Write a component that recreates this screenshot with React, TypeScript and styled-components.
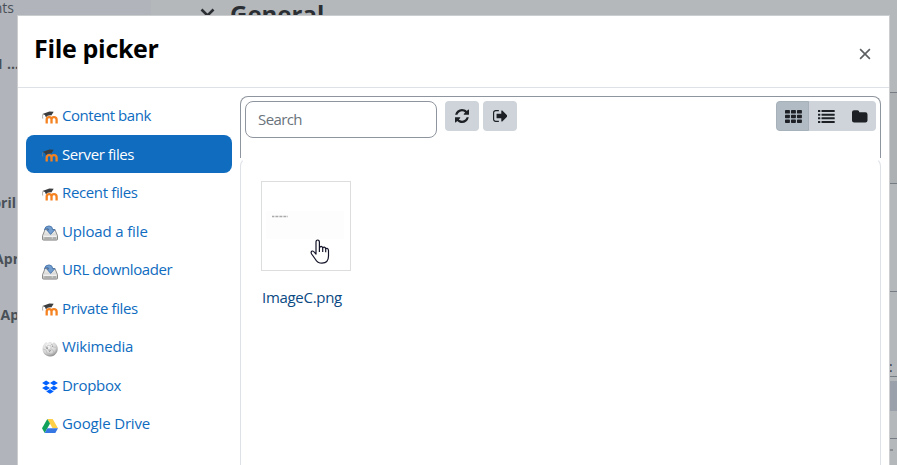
import React from "react";
import styled, { createGlobalStyle, css } from "styled-components";

const Global = createGlobalStyle`
  * { box-sizing: border-box; }
  body {
    margin: 0;
    overflow: hidden;
    background: #b4b8bb;
    font-family: "Open Sans", "Noto Sans", sans-serif;
    font-size: 15px;
    line-height: 24px;
    color: #1d2125;
  }
  button, input { font: inherit; }
`;

const Screen = styled.div`
  position: relative;
  width: 897px;
  height: 465px;
  overflow: hidden;
`;

/* ---------- dimmed course page ---------- */
const CoursePage = styled.div`
  display: grid;
  grid-template-columns: 151px 1fr 8px;
  height: 100%;
  background: #b4b8bb;
`;
const Drawer = styled.aside`
  background: #b1b4ba;
  color: #495057;
`;
const DrawerEntry = styled.div<{ $gap: number; $width: number; $bold?: boolean }>`
  width: ${(p) => p.$width}px;
  margin-top: ${(p) => p.$gap}px;
  display: flex;
  justify-content: flex-end;
  white-space: nowrap;
  font-size: 14px;
  line-height: 20px;
  font-weight: ${(p) => (p.$bold ? 700 : 400)};
`;
const SectionTitle = styled.div`
  display: flex;
  align-items: flex-start;
  gap: 15px;
  padding-left: 49px;
  font-size: 24px;
  line-height: 27px;
  letter-spacing: 0;
  font-weight: 700;
  color: #2b2f34;
  svg { margin-top: 8px; }
`;
const FormEdge = styled.div`
  display: flex;
  flex-direction: column;
  padding-top: 92px;
`;
const EdgeCell = styled.div<{ $h: number; $fill?: string; $line?: boolean }>`
  height: ${(p) => p.$h}px;
  flex: none;
  background: ${(p) => p.$fill || "transparent"};
  border-top: ${(p) => (p.$line ? "1px solid #767c84" : "0")};
`;
const Colon = styled.div`
  height: 16px;
  font-size: 14px;
  line-height: 14px;
  text-indent: 0;
  color: #35384a;
`;
const EdgeDash = styled.div`
  width: 3px;
  height: 2px;
  margin: 10px 0 0 1px;
  background: #8a8e92;
`;

/* ---------- dialog ---------- */
const Dialog = styled.section`
  position: absolute;
  left: 17px;
  top: 15px;
  width: 873px;
  height: 470px;
  background: #fff;
  border: 1px solid #cbcdcf;
`;
const DialogHeader = styled.header`
  display: flex;
  justify-content: space-between;
  height: 72px;
  padding: 14px 18px 0 16px;
  border-bottom: 1px solid #dee2e6;
`;
const Title = styled.h3`
  margin: 0;
  font-size: 25px;
  line-height: 36px;
  letter-spacing: -0.33px;
  color: #000;
`;
const CloseButton = styled.button`
  display: flex;
  padding: 0;
  height: 16px;
  margin-top: 17.5px;
  border: 0;
  background: none;
`;
const DialogBody = styled.div`
  display: flex;
  gap: 8px;
  padding: 8px 8px 0 8px;
`;
const RepositoryList = styled.nav`
  display: grid;
  grid-auto-rows: 38.5px;
  width: 206px;
  flex: none;
`;
const Repository = styled.a<{ $active?: boolean; $track: number }>`
  display: flex;
  gap: 4px;
  height: 38px;
  margin-top: 0.5px;
  padding: 6.8px 16px;
  border-radius: 8px;
  color: #0f6cbf;
  letter-spacing: ${(p) => p.$track}px;
  white-space: nowrap;
  svg { flex: none; margin-top: 6.7px; }
  ${(p) => p.$active && css`
    background: #0f6cbf;
    color: #fff;
  `}
`;
const Browser = styled.main`
  width: 641px;
  flex: none;
`;
const Toolbar = styled.div`
  display: flex;
  align-items: flex-start;
  height: 62px;
  padding: 4px;
  border: 1px solid #8f959e;
  border-bottom: 0;
  border-radius: 8px 8px 0 0;
`;
const SearchInput = styled.input`
  width: 192px;
  height: 37px;
  padding: 0 12px 2px;
  margin-right: 8px;
  border: 1px solid #8f959e;
  border-radius: 8px;
  background: #fff;
  letter-spacing: -0.6px;
  &::placeholder { color: #6a737b; opacity: 1; }
`;
const ToolButton = styled.button`
  display: flex;
  align-items: center;
  justify-content: center;
  width: 34px;
  height: 30px;
  margin-right: 4px;
  padding: 0;
  border: 0;
  border-radius: 4px;
  background: #ced4da;
`;
const ViewGroup = styled.div`
  display: flex;
  height: 30px;
  margin-left: auto;
  border-radius: 4px;
  overflow: hidden;
  background: #ced4da;
`;
const ViewButton = styled.button<{ $on?: boolean; $w?: number }>`
  display: flex;
  align-items: center;
  justify-content: center;
  width: ${(p) => p.$w || 33}px;
  padding: 0 0 0 1px;
  border: ${(p) => (p.$on ? "1px solid #a6b1ba" : "0")};
  border-radius: ${(p) => (p.$on ? "4px 0 0 4px" : "0")};
  background: ${(p) => (p.$on ? "#b1bbc4" : "transparent")};
`;
const FileArea = styled.div`
  height: 320px;
  padding: 22px 20px;
  border: 1px solid #dee2e6;
  border-top-color: #fff;
  border-radius: 8px 8px 0 0;
`;
const FileCard = styled.figure`
  display: flex;
  flex-direction: column;
  width: 110px;
  margin: 0;
`;
const Thumbnail = styled.div`
  position: relative;
  width: 90px;
  height: 90px;
  border: 1px solid #dcdddd;
`;
const Pointer = styled.svg`
  position: absolute;
  left: 48px;
  top: 57px;
`;
const FileName = styled.figcaption`
  margin-top: 14px;
  padding-left: 1px;
  color: #0b4a83;
  letter-spacing: -0.3px;
`;

/* ---------- icons ---------- */
const MoodleIcon = () => (
  <svg width="16" height="16" viewBox="0 0 16 16">
    <path d="M4.700 13.600V9.600Q4.700 7.100 7.100 7.100T9.500 9.600V13.600M9.500 9.600Q9.500 7.100 12 7.100t2.600 2.500v4" fill="none" stroke="#f58220" strokeWidth="2.300" />
    <path d="M.4 4 7.400 1.500l4.300.3-2.400 3.600Q5.400 5 3.900 7.200L2.900 5z" fill="#3c3d3e" />
    <path d="M.9 4.300Q.3 6 .7 8.600" fill="none" stroke="#8a8782" strokeWidth=".7" />
  </svg>
);
const DownloadIcon = () => (
  <svg width="16" height="16" viewBox="0 0 16 16">
    <defs>
      <linearGradient id="drive" x1="0" y1="0" x2="0" y2="1">
        <stop stopColor="#f4f4f3" /><stop offset="1" stopColor="#bfc0be" />
      </linearGradient>
    </defs>
    <path d="M3.100 4.500h9.800l2.600 6.200v3.500q0 .9-.9.9H1.400q-.9 0-.9-.9v-3.500z" fill="url(#drive)" stroke="#8a8c8a" />
    <path d="M1.400 11.200h13.200" stroke="#fff" />
    <path d="M2.400 13h7.300M11 13h3" stroke="#929491" />
    <path d="M2.400 4.900Q3 .9 7 .9q3.400 0 3.800 3.800h2.100L8.600 9.400 4.700 4.900h2.200Q6.400 3.200 4.900 3.400 3.400 3.500 2.400 4.900z" fill="#729fcf" stroke="#3c69a5" strokeWidth=".8" />
  </svg>
);
const WikimediaIcon = () => (
  <svg width="16" height="16" viewBox="0 0 16 16">
    <defs>
      <radialGradient id="globe" cx=".4" cy=".3" r=".8">
        <stop stopColor="#fafafa" /><stop offset=".6" stopColor="#d4d4d4" /><stop offset="1" stopColor="#707070" />
      </radialGradient>
    </defs>
    <path d="M2.700 2.200 4.400 1l1.300 1.200 1.700-1.400 2 .5.7 1.100 1.800-1.100A7.600 7.600 0 1 1 .5 8.200a8 8 0 0 1 2.200-6z" fill="url(#globe)" />
    <path d="m3 5 2 1 1-2 2 1 2-2 1 3 3 .3M1 8l3 1 1 3 3 .5 2 2M5 6l1 3 3-1 2 1 1 3M9 5v3" fill="none" stroke="#aaa" strokeWidth=".5" />
    <path d="m4 6 1 2 .8-1.700M7 9l.6 1.700L9 9M10 5l1 .8" fill="none" stroke="#777" strokeWidth=".6" />
  </svg>
);
const DropboxIcon = () => (
  <svg width="16" height="16" viewBox="0 0 16 16" fill="#0061fe">
    <path d="m4.100 1.500 3.900 2.500-3.900 2.500L.1 4zM11.900 1.500l4 2.500-4 2.500L8 4zM4.100 6.700 8 9.100l-3.900 2.500-4-2.500zM11.900 6.700l4 2.400-4 2.500L8 9.100zM8 10l3.800 2.400L8 14.800l-3.800-2.400z" />
  </svg>
);
const DriveIcon = () => (
  <svg width="16" height="16" viewBox="0 0 16 16">
    <path d="M5.300 1h5.400L16 10.200h-5.400z" fill="#ffcf48" />
    <path d="M5.300 1 8 5.600 2.700 14.900 0 10.200z" fill="#11a15b" />
    <path d="M5.400 10.200H16l-2.700 4.700H2.700z" fill="#3777e3" />
  </svg>
);
const RefreshIcon = () => (
  <svg width="14" height="14" viewBox="0 128 1536 1536" fill="#1d2125">
    <path transform="translate(0 128)" d="M1511 928q0 5-1 7-64 268-268 434.500t-478 166.500q-146 0-282.500-55t-243.500-157l-129 129q-19 19-45 19t-45-19-19-45v-448q0-26 19-45t45-19h448q26 0 45 19t19 45-19 45l-137 137q71 66 161 102t187 36q134 0 250-65t186-179q11-17 53-117 8-23 30-23h192q13 0 22.500 9.500t9.500 22.500zm25-800v448q0 26-19 45t-45 19h-448q-26 0-45-19t-19-45 19-45l138-138q-148-137-349-137-134 0-250 65t-186 179q-11 17-53 117-8 23-30 23h-199q-13 0-22.500-9.500t-9.500-22.500v-7q65-268 270-434.500t480-166.500q146 0 284 55.500t245 156.500l130-129q19-19 45-19t45 19 19 45z" />
  </svg>
);
const SignOutIcon = () => (
  <svg width="14.500" height="12" viewBox="0 256 1568 1280" fill="#1d2125">
    <path d="M640 1440q0 4 1 20t.5 26.500-3 23.500-10 19.500-20.500 6.500h-320q-119 0-203.500-84.500t-84.500-203.500v-704q0-119 84.500-203.500t203.500-84.500h320q13 0 22.500 9.500t9.500 22.500q0 4 1 20t.5 26.500-3 23.500-10 19.500-20.500 6.500h-320q-66 0-113 47t-47 113v704q0 66 47 113t113 47h312l11.500 1 11.500 3 8 5.500 7 9 2 13.500zm928-544q0 26-19 45l-544 544q-19 19-45 19t-45-19-19-45v-288h-448q-26 0-45-19t-19-45v-384q0-26 19-45t45-19h448v-288q0-26 19-45t45-19 45 19l544 544q19 19 19 45z" />
  </svg>
);
const GridIcon = () => (
  <svg width="17" height="13" viewBox="0 0 17 13" fill="#1d2125">
    {[0, 4.7, 9.4].map((y) => [0, 6, 12].map((x) => (
      <rect key={`${x}-${y}`} x={x} y={y} width="4.900" height="3.600" rx=".7" />
    )))}
  </svg>
);
const ListIcon = () => (
  <svg width="17" height="13" viewBox="0 0 17 13" fill="#1d2125">
    {[0, 3.65, 7.3, 10.95].map((y) => (
      <React.Fragment key={y}>
        <rect x="0" y={y} width="2.300" height="2" rx=".3" />
        <rect x="3.500" y={y} width="13.200" height="2" rx=".3" />
      </React.Fragment>
    ))}
  </svg>
);
const FolderIcon = () => (
  <svg width="16" height="13" viewBox="0 0 16 13" fill="#1d2125">
    <path d="M2.100.2h3.200q2 0 2 2.100h6.100q2.100 0 2.100 2.100v6.100q0 2.100-2.100 2.100H2.100Q0 12.600 0 10.500V2.300Q0 .2 2.100 .2z" />
  </svg>
);

const repositories = [
  { name: "Content bank", Icon: MoodleIcon, track: -0.47 },
  { name: "Server files", Icon: MoodleIcon, track: -0.4, active: true },
  { name: "Recent files", Icon: MoodleIcon, track: -0.36 },
  { name: "Upload a file", Icon: DownloadIcon, track: -0.15 },
  { name: "URL downloader", Icon: DownloadIcon, track: -0.4 },
  { name: "Private files", Icon: MoodleIcon, track: -0.37 },
  { name: "Wikimedia", Icon: WikimediaIcon, track: -0.2 },
  { name: "Dropbox", Icon: DropboxIcon, track: -0.3 },
  { name: "Google Drive", Icon: DriveIcon, track: -0.15 },
];

export default function App() {
  return (
    <Screen>
      <Global />
      <CoursePage>
        <Drawer>
          <DrawerEntry $gap={-2} $width={14}>nts</DrawerEntry>
          <DrawerEntry $gap={36} $width={19} $bold>1 ...</DrawerEntry>
          <DrawerEntry $gap={119} $width={16} $bold>pril</DrawerEntry>
          <DrawerEntry $gap={36} $width={19} $bold>Apr</DrawerEntry>
          <DrawerEntry $gap={36} $width={19} $bold>Ap</DrawerEntry>
        </Drawer>
        <SectionTitle>
          <svg width="15" height="10" viewBox="0 0 15 10">
            <path d="m1.500 1.500 6 6 6-6" fill="none" stroke="#2b2f34" strokeWidth="2.600" />
          </svg>
          General
        </SectionTitle>
        <FormEdge>
          <EdgeCell $h={91} $fill="#adb1b4" $line />
          <EdgeCell $h={108} $line />
          <EdgeCell $h={69} $line />
          <Colon>:</Colon>
          <EdgeCell $h={5} $line />
          <EdgeCell $h={30} $fill="#9aa1aa" />
          <EdgeCell $h={27} />
          <EdgeCell $h={1} $line />
          <EdgeDash />
        </FormEdge>
      </CoursePage>

      <Dialog role="dialog" aria-label="File picker">
        <DialogHeader>
          <Title>File picker</Title>
          <CloseButton aria-label="Close">
            <svg width="12" height="12" viewBox="0 0 12 12">
              <path d="m1.100 1.100 9.800 9.800m0-9.800-9.800 9.800" stroke="#5c5f62" strokeWidth="1.600" />
            </svg>
          </CloseButton>
        </DialogHeader>
        <DialogBody>
          <RepositoryList>
            {repositories.map(({ name, Icon, track, active }) => (
              <Repository key={name} $track={track} $active={active}>
                <Icon />
                <span>{name}</span>
              </Repository>
            ))}
          </RepositoryList>
          <Browser>
            <Toolbar>
              <SearchInput placeholder="Search" />
              <ToolButton aria-label="Refresh"><RefreshIcon /></ToolButton>
              <ToolButton aria-label="Log out"><SignOutIcon /></ToolButton>
              <ViewGroup>
                <ViewButton $on aria-label="Icons"><GridIcon /></ViewButton>
                <ViewButton aria-label="Details"><ListIcon /></ViewButton>
                <ViewButton $w={34} aria-label="Tree"><FolderIcon /></ViewButton>
              </ViewGroup>
            </Toolbar>
            <FileArea>
              <FileCard>
                <Thumbnail>
                  <svg width="88" height="88" viewBox="0 0 88 88">
                    <rect x="4" y="29" width="78" height="28" fill="#fdfdfd" />
                    <path d="M10 34.500h16" stroke="#aaa" strokeWidth="1.500" strokeDasharray="2 .6 1 .4" />
                  </svg>
                  <Pointer width="20" height="26" viewBox="0 0 20 26">
                    <path d="M6 15V3.200Q6 1 7.700 1t1.700 2.200v6.300Q9.600 7.300 11.200 7.400q1.500.1 1.500 2 .3-1.400 1.600-1.200 1.400.2 1.400 2 .3-1 1.400-.8 1.400.3 1.400 2.200v5.500q0 7-6.500 7.100-4.500 0-6.800-4.200L1.600 15q-1.100-2.200.4-2.900 1.300-.5 2.500 1.200zM9.400 9.500V13M12.700 9.400V13M15.700 10.200v3" fill="#fff" stroke="#15152a" strokeWidth="1.200" strokeLinejoin="round" />
                  </Pointer>
                </Thumbnail>
                <FileName>ImageC.png</FileName>
              </FileCard>
            </FileArea>
          </Browser>
        </DialogBody>
      </Dialog>
    </Screen>
  );
}
